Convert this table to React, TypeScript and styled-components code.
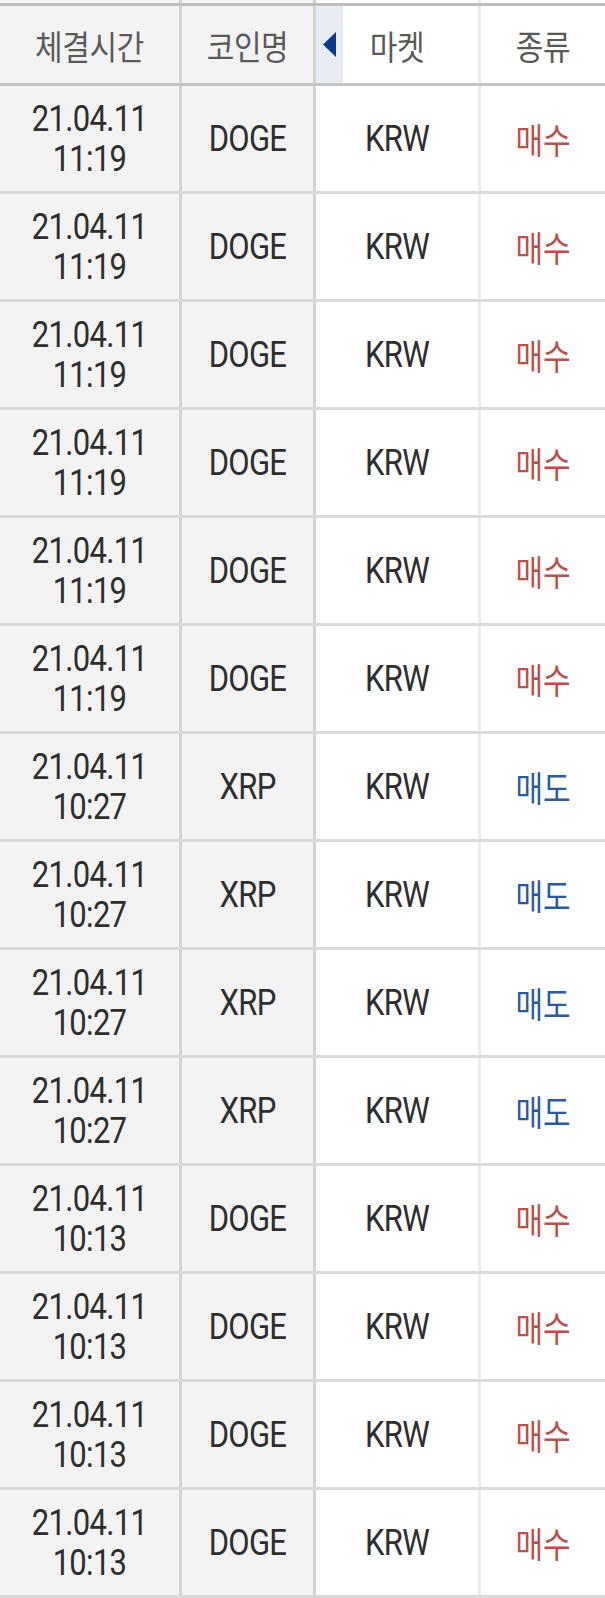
import React from "react";
import styled, { createGlobalStyle } from "styled-components";

const Global = createGlobalStyle`
  html, body { margin: 0; padding: 0; background: #ffffff; }
  body { font-family: Roboto, "Noto Sans CJK KR", sans-serif; }
`;

const COLS = "179px 134px 165px 127px";

const Table = styled.div`
  width: 605px;
  display: flex;
  flex-direction: column;
`;

const Row = styled.div<{ $h: number; $line?: string }>`
  display: grid;
  grid-template-columns: ${COLS};
  height: ${(p) => p.$h}px;
  border-bottom: ${(p) => (p.$line ? `3px solid ${p.$line}` : "none")};
`;

const Cell = styled.div<{ $gray?: boolean; $edge?: string }>`
  position: relative;
  box-sizing: border-box;
  display: flex;
  align-items: center;
  justify-content: center;
  background: ${(p) => (p.$gray ? "#f3f3f3" : "#ffffff")};
  border-left: ${(p) => (p.$edge ? `3px solid ${p.$edge}` : "none")};
  text-align: center;
`;

const HeadText = styled.span`
  font-family: "Noto Sans CJK KR", sans-serif;
  font-size: 30px;
  color: #5a5a5a;
  display: inline-block;
  transform: scaleY(1.12);
  letter-spacing: -0.4px;
`;

const BodyText = styled.span<{ $color?: string; $kr?: boolean }>`
  font-family: ${(p) => (p.$kr ? `"Noto Sans CJK KR", sans-serif` : `Roboto, sans-serif`)};
  font-size: ${(p) => (p.$kr ? 30 : 31)}px;
  line-height: 34px;
  color: ${(p) => p.$color ?? "#2e2e2e"};
  display: inline-block;
  transform: scaleY(1.18);
  letter-spacing: ${(p) => (p.$kr ? "0px" : "-0.7px")};
`;

const ScrollHint = styled.div`
  position: absolute;
  left: 0;
  top: 0;
  bottom: 0;
  width: 27px;
  background: #e9ecf2;
  display: flex;
  align-items: center;
  justify-content: center;
`;

const EDGE = "#d4d4d4";
const EDGE_LIGHT = "#ebebeb";

type Trade = { date: string; time: string; coin: string; buy: boolean };

const trades: Trade[] = [
  ...Array(6).fill({ date: "21.04.11", time: "11:19", coin: "DOGE", buy: true }),
  ...Array(4).fill({ date: "21.04.11", time: "10:27", coin: "XRP", buy: false }),
  ...Array(4).fill({ date: "21.04.11", time: "10:13", coin: "DOGE", buy: true }),
];

export default function App() {
  return (
    <>
      <Global />
      <Table>
        <Row $h={3} $line="#bdbdbd">
          <Cell $gray />
          <Cell $gray $edge={EDGE} />
          <Cell $edge={EDGE} />
          <Cell $edge={EDGE_LIGHT} />
        </Row>
        <Row $h={77} $line="#c4c4c4">
          <Cell $gray>
            <HeadText>체결시간</HeadText>
          </Cell>
          <Cell $gray $edge={EDGE}>
            <HeadText>코인명</HeadText>
          </Cell>
          <Cell $edge={EDGE}>
            <ScrollHint>
              <svg width="13" height="25" viewBox="0 0 13 25">
                <polygon points="13,0 13,25 0,12.5" fill="#0b3a8c" />
              </svg>
            </ScrollHint>
            <HeadText>마켓</HeadText>
          </Cell>
          <Cell $edge={EDGE_LIGHT}>
            <HeadText>종류</HeadText>
          </Cell>
        </Row>
        {trades.map((t, i) => (
          <Row key={i} $h={105} $line="#dadada">
            <Cell $gray>
              <BodyText>
                {t.date}
                <br />
                {t.time}
              </BodyText>
            </Cell>
            <Cell $gray $edge={EDGE}>
              <BodyText>{t.coin}</BodyText>
            </Cell>
            <Cell $edge={EDGE}>
              <BodyText>KRW</BodyText>
            </Cell>
            <Cell $edge={EDGE_LIGHT}>
              <BodyText $kr $color={t.buy ? "#b8514b" : "#2a5b9c"}>
                {t.buy ? "매수" : "매도"}
              </BodyText>
            </Cell>
          </Row>
        ))}
      </Table>
    </>
  );
}
